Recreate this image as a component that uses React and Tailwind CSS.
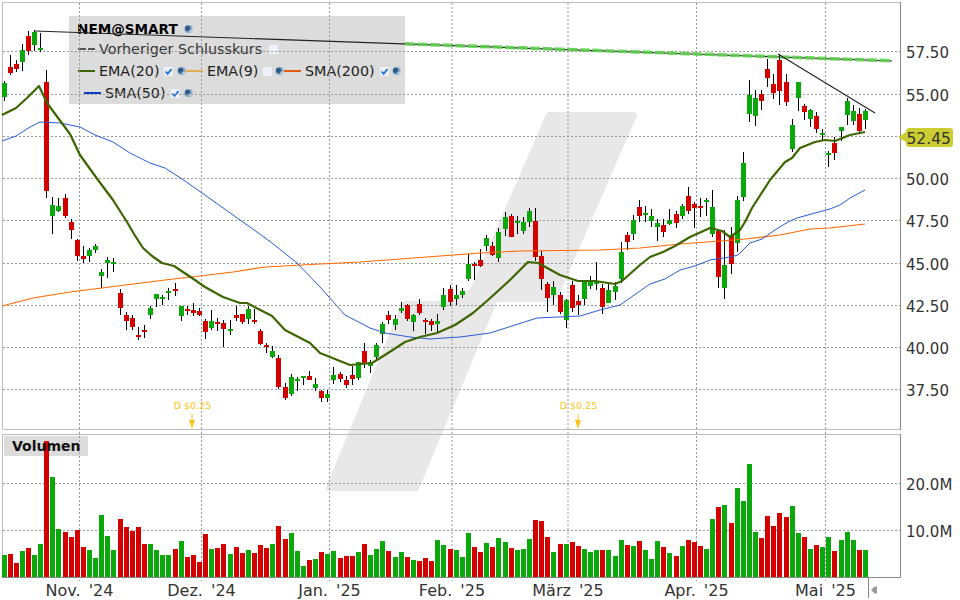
import React from 'react';

// [color, bodyTop, bodyBottom, wickTop, wickBottom] in page pixels
const candles = [
  ['g',83,97,81,101],['r',67,73,55,75],['r',64,69,60,72],['g',50,62,44,71],['r',36,51,31,55],['g',32,45,30,51],['g',48,50,33,52],
  ['r',82,191,70,198],['g',205,216,197,234],['g',206,211,198,212],['r',198,216,194,218],['r',222,230,219,239],['r',240,256,239,261],
  ['r',256,259,246,263],['g',250,256,248,262],['g',246,250,244,253],['g',272,276,269,288],['g',260,263,257,278],['g',262,264,258,272],
  ['r',293,308,289,315],['r',315,321,312,330],['r',318,327,315,330],['r',335,337,327,340],['r',330,332,325,338],['g',308,315,306,319],
  ['g',294,299,294,307],['g',297,299,295,305],['g',291,293,288,300],['r',289,291,283,296],['g',306,316,306,321],['r',309,311,306,315],
  ['r',310,313,303,316],['r',311,315,308,316],['r',321,332,319,339],['g',321,328,310,330],['r',322,324,318,331],['r',323,329,320,347],
  ['g',329,331,320,335],['r',315,318,306,321],['r',314,322,314,324],['g',309,319,306,324],['r',320,322,309,324],['r',331,344,329,345],
  ['r',345,347,343,353],['g',351,357,346,358],['r',358,387,355,389],['r',387,398,383,400],['g',377,394,374,396],['g',379,381,377,391],
  ['g',376,378,376,385],['r',376,380,371,380],['g',384,388,378,391],['r',391,398,390,402],['g',394,398,390,402],['g',375,380,367,384],
  ['r',374,379,372,382],['r',380,385,376,388],['r',375,379,366,385],['g',362,378,362,380],['r',351,363,343,368],['g',362,366,360,373],
  ['g',345,357,343,361],['g',324,334,322,343],['r',315,320,311,324],['g',319,325,315,330],['g',308,311,302,313],['r',305,319,304,321],
  ['g',315,322,314,331],['r',304,313,299,315],['r',320,322,318,334],['r',321,325,319,331],['g',321,324,314,332],['g',295,307,288,310],
  ['r',289,302,285,306],['g',295,299,285,305],['g',291,295,288,298],['g',264,279,254,281],['r',264,266,262,280],['r',260,266,249,267],
  ['g',238,246,235,251],['r',246,255,242,256],['g',232,258,228,262],['g',217,229,212,236],['r',216,237,214,237],['g',221,223,216,234],
  ['g',222,231,217,234],['g',211,222,208,227],['r',221,257,208,261],['r',256,279,251,290],['r',284,298,282,312],['g',287,295,281,305],
  ['r',295,312,292,314],['g',300,320,299,328],['r',285,308,281,312],['r',301,305,295,315],['g',282,299,280,305],['g',282,286,276,289],
  ['g',282,284,262,290],['r',288,307,284,314],['g',290,303,282,303],['g',286,292,282,300],['g',252,279,242,283],['r',235,242,232,250],
  ['g',220,234,215,240],['r',207,216,200,222],['g',213,215,206,222],['g',216,221,209,227],['g',223,227,219,241],['r',225,232,219,237],
  ['g',220,224,209,225],['r',214,223,211,228],['g',206,216,204,219],['r',196,211,187,214],['r',204,208,202,228],['r',206,208,198,217],
  ['g',200,202,198,216],['g',207,234,190,237],['r',231,277,229,288],['g',265,288,230,299],['r',235,264,227,274],['g',200,243,196,252],
  ['g',163,197,152,201],['g',95,114,80,122],['g',98,116,90,126],['r',94,101,90,110],['r',69,78,59,87],['r',84,93,74,99],['r',60,91,54,105],
  ['r',82,102,74,106],['g',125,149,119,152],['g',82,98,82,111],['r',106,112,104,120],['g',110,119,109,127],['r',116,129,112,133],
  ['g',133,135,129,140],['g',153,155,151,167],['r',143,153,137,160],['g',127,131,127,141],['g',101,115,98,125],['g',111,121,105,125],
  ['r',114,131,108,133],['g',111,120,109,129],
];

// [color, top] in page pixels, baseline is 577
const volumes = [
  ['g',555],['r',554],['r',563],['g',551],['r',548],['g',555],['g',544],['r',441],['g',477],['g',529],['r',532],['r',537],['r',530],
  ['r',547],['g',550],['g',558],['g',515],['g',536],['g',550],['r',519],['r',527],['r',531],['r',527],['r',544],['g',544],['g',550],
  ['g',555],['g',555],['r',549],['g',541],['r',557],['r',555],['r',562],['r',534],['g',549],['r',548],['r',544],['g',554],['r',547],
  ['r',553],['g',550],['r',553],['r',545],['r',548],['g',544],['r',526],['r',539],['g',533],['g',551],['g',566],['r',560],['g',559],
  ['r',552],['g',554],['g',551],['r',558],['r',556],['r',556],['g',552],['r',544],['g',555],['g',549],['g',541],['r',551],['g',557],
  ['g',552],['r',557],['g',560],['r',561],['r',558],['r',561],['g',540],['g',545],['r',549],['g',550],['g',557],['g',533],['r',547],
  ['r',552],['g',543],['r',547],['g',538],['g',542],['r',548],['g',550],['g',549],['g',539],['r',520],['r',521],['r',537],['g',552],
  ['r',544],['g',544],['r',542],['r',546],['g',549],['g',552],['g',550],['r',550],['g',550],['g',556],['g',540],['r',545],['g',546],
  ['r',541],['g',550],['g',559],['g',541],['r',547],['g',553],['r',556],['g',546],['r',540],['r',542],['r',546],['g',549],['g',519],
  ['r',507],['g',505],['r',523],['g',488],['g',501],['g',464],['g',532],['r',538],['r',516],['r',526],['r',513],['r',517],['g',506],
  ['g',533],['r',537],['g',549],['r',545],['g',547],['g',537],['r',551],['g',540],['g',532],['g',540],['r',550],['g',550],
];

const ema20 = '2,115 16,108 27,98 39,86 47,103 70,134 80,155 98,180 113,200 127,222 134,234 143,248 152,256 162,263 174,266 192,278 205,287 223,297 240,303 247,303 272,316 285,330 310,343 320,353 335,359 350,365 372,363 385,355 405,342 420,337 437,333 455,325 473,313 488,300 510,280 528,262 538,263 560,275 578,281 595,281 615,284 622,281 640,265 650,257 663,252 675,246 690,237 710,228 722,231 730,237 740,230 745,222 752,208 770,180 785,162 792,158 800,148 815,142 825,140 835,141 850,135 865,132';
const sma50 = '2,141 16,136 30,127 40,122 60,123 80,127 95,135 113,142 130,153 150,163 165,168 185,181 212,200 233,215 257,232 272,243 297,263 320,287 345,315 370,328 385,333 410,337 430,339 460,337 490,333 537,318 580,316 600,310 620,305 640,291 650,284 665,279 680,270 695,266 710,260 730,257 738,255 750,243 762,239 775,230 788,222 797,218 815,213 830,209 840,205 850,198 865,190';
const sma200 = '2,306 33,298 70,292 110,287 165,280 200,276 233,272 265,267 320,264 360,262 400,259 440,256 480,253 520,251 600,250 640,248 680,244 720,241 745,239 780,235 810,229 830,228 865,224';

const priceTicks = [[51,'57.50'],[94,'55.00'],[136,'52.50'],[178,'50.00'],[220,'47.50'],[263,'45.00'],[305,'42.50'],[347,'40.00'],[389,'37.50']];
const monthTicks = [[79.5,"Nov. '24"],[201.5,"Dez. '24"],[329.5,"Jan. '25"],[452,"Feb. '25"],[568,"März '25"],[696.5,"Apr. '25"],[825.5,"Mai '25"]];

const xOf = (i) => Math.round(3.5 + 6.11 * i);
const fill = { g: '#0aa80a', r: '#d40000' };

function Orb() {
  return (
    <svg width="9" height="10" viewBox="0 0 9 10" className="shrink-0 block">
      <circle cx="4.5" cy="5" r="4" fill="#7fa6c8" />
      <circle cx="3.6" cy="4.4" r="2.6" fill="#2f5b86" />
      <circle cx="6.6" cy="6.8" r="1.2" fill="#c4d8ea" />
    </svg>
  );
}

function Check({ on }) {
  return (
    <svg width="9" height="9" viewBox="0 0 9 9" className="shrink-0 block">
      <rect width="9" height="9" rx="1" fill="#eef0fa" />
      {on && <path d="M1.5 4.5 L3.6 6.8 L7.6 2" fill="none" stroke="#1a6fd8" strokeWidth="1.8" />}
    </svg>
  );
}

function Swatch({ color, dashed }) {
  if (dashed) {
    return (
      <span className="flex w-[17px] gap-[2px] shrink-0">
        <span className="h-[2px] w-[8px] bg-[#555555]" />
        <span className="h-[2px] w-[7px] bg-[#555555]" />
      </span>
    );
  }
  return <span className="block h-[2px] w-[17px] shrink-0" style={{ backgroundColor: color }} />;
}

function Legend() {
  return (
    <div className="absolute left-[69px] top-[16px] w-[336px] h-[88px] bg-[#dcdcdc] text-[14.3px] leading-[20px] text-[#222222] pl-[9px] pt-[3px]">
      <div className="flex items-center h-[20px]">
        <span className="font-bold text-[13.6px] text-black -ml-[1px] mr-[6px]">NEM@SMART</span>
        <Orb />
      </div>
      <div className="flex items-center h-[20px] gap-[4px]">
        <Swatch dashed />
        <span className="text-[#333333]">Vorheriger Schlusskurs</span>
        <span className="ml-[3px]"><Check /></span>
      </div>
      <div className="flex items-center h-[22px] mt-[1px]">
        <Swatch color="#3d6600" />
        <span className="ml-[4px] mr-[5px] w-[60px]">EMA(20)</span>
        <Check on />
        <span className="ml-[4px]"><Orb /></span>
        <Swatch color="#e0ac50" />
        <span className="ml-[4px] mr-[5px] w-[51px]">EMA(9)</span>
        <Check />
        <span className="ml-[3px]"><Orb /></span>
        <Swatch color="#e05a10" />
        <span className="ml-[4px] mr-[6px] w-[69px]">SMA(200)</span>
        <Check on />
        <span className="ml-[3px]"><Orb /></span>
      </div>
      <div className="flex items-center h-[22px] pl-[6px]">
        <Swatch color="#0a3cc0" />
        <span className="ml-[4px] mr-[5px] w-[61px]">SMA(50)</span>
        <Check on />
        <span className="ml-[4px]"><Orb /></span>
      </div>
    </div>
  );
}

function Dividend({ x }) {
  return (
    <g>
      <text x={x} y="409" textAnchor="middle" fontSize="9.5" fill="#fcc419">D $0.25</text>
      <path d={`M${x - 0.5} 414 V422`} stroke="#fcc419" strokeWidth="1" />
      <path d={`M${x - 3.5} 420 H${x + 2.5} L${x - 0.5} 429 Z`} fill="#fcc419" />
    </g>
  );
}

function PricePane() {
  return (
    <svg width="960" height="432" viewBox="0 0 960 432" className="block relative">
      {priceTicks.map(([y]) => (
        <line key={y} x1="3" x2="900" y1={y + 0.5} y2={y + 0.5} stroke="#999999" strokeDasharray="2 2" />
      ))}
      {monthTicks.map(([x]) => (
        <line key={x} x1={x} x2={x} y1="3" y2="429" stroke="#999999" strokeDasharray="2 2" />
      ))}
      <path d="M2.5 429 V2.5 H900" fill="none" stroke="#bbbbbb" strokeWidth="1" />
      <path d="M2.5 429.5 H900" stroke="#bbbbbb" strokeWidth="1" />
      <path d="M900.5 2 V430" stroke="#888888" strokeWidth="1" />

      <g shapeRendering="crispEdges">
        {candles.map(([c, top, bottom, high, low], i) => (
          <g key={i}>
            <rect x={xOf(i)} y={high} width="1" height={low - high} fill="#000000" />
            <rect x={xOf(i) - 2} y={top} width="5" height={bottom - top} fill={fill[c]} />
          </g>
        ))}
      </g>

      <polyline points={sma200} fill="none" stroke="#ff6a00" strokeWidth="1.2" />
      <polyline points={sma50} fill="none" stroke="#2a5bd7" strokeWidth="1" />
      <polyline points={ema20} fill="none" stroke="#3d6600" strokeWidth="2.2" strokeLinejoin="round" />

      <line x1="35" y1="31" x2="892" y2="61" stroke="#222222" strokeWidth="1.2" />
      <line x1="405" y1="43.8" x2="892" y2="60.8" stroke="#5fcf4f" strokeWidth="3.5" strokeDasharray="10 2.5" opacity="0.9" />
      <line x1="778" y1="54" x2="875" y2="113" stroke="#222222" strokeWidth="1.1" />

      <Dividend x={192.5} />
      <Dividend x={578.5} />

      <g fontSize="15" fill="#333333">
        {priceTicks.map(([y, label]) => label !== '52.50' && (
          <text key={y} x="906" y={y + 7}>{label}</text>
        ))}
      </g>
      <path d="M898 137.5 L906 132 Q906 128 909 128 H950 Q953 128 953 131 V144 Q953 147 950 147 H909 Q906 147 906 144 V142 Z" fill="#cccc33" />
      <text x="906.5" y="144" fontSize="15.5" fill="#333333">52.45</text>
    </svg>
  );
}

function VolumePane() {
  return (
    <svg width="960" height="168" viewBox="0 432 960 168" className="block relative">
      <path d="M2.5 577 V434.5 H900" fill="none" stroke="#bbbbbb" strokeWidth="1" />
      <path d="M2 577.5 H900.5 V434" fill="none" stroke="#888888" strokeWidth="1" />
      {[483, 530].map((y) => (
        <line key={y} x1="3" x2="900" y1={y + 0.5} y2={y + 0.5} stroke="#999999" strokeDasharray="2 2" />
      ))}
      {monthTicks.map(([x]) => (
        <line key={x} x1={x} x2={x} y1="432" y2="581" stroke="#999999" strokeDasharray="2 2" />
      ))}
      <g shapeRendering="crispEdges">
        {volumes.map(([c, top], i) => (
          <rect key={i} x={xOf(i) - 2} y={top} width="5" height={577 - top} fill={fill[c]} />
        ))}
      </g>
      <text x="12" y="451" fontSize="14" fontWeight="700" fill="#111111">Volumen</text>
      <g fontSize="15" fill="#333333">
        <text x="906" y="490">20.0M</text>
        <text x="906" y="537">10.0M</text>
        {monthTicks.map(([x, label]) => (
          <text key={x} x={x} y="596" textAnchor="middle" fontSize="16" wordSpacing="3">{label}</text>
        ))}
      </g>
      <path d="M868.5 578 V598" stroke="#888888" strokeWidth="1" />
      <path d="M871 590 L874.5 586.5 H877 V593.5 H874.5 Z" fill="#999999" />
    </svg>
  );
}

export default function App() {
  return (
    <div className="relative w-[960px] h-[600px] overflow-hidden bg-white font-['DejaVu_Sans',sans-serif]">
      {/* watermark sits behind both panes */}
      <svg width="960" height="600" className="absolute inset-0">
        <path
          d="M549 115 H634 L556 294 Q553 299 548 299 H495 L416 488 H329 L405 304 H428 Q465 304 474 288 Z"
          fill="#e8e8e8"
          stroke="#e8e8e8"
          strokeWidth="6"
          strokeLinejoin="round"
        />
      </svg>
      <Legend />
      <div className="absolute left-[4px] top-[436px] w-[84px] h-[20px] bg-[#dcdcdc]" />
      <PricePane />
      <VolumePane />
    </div>
  );
}
